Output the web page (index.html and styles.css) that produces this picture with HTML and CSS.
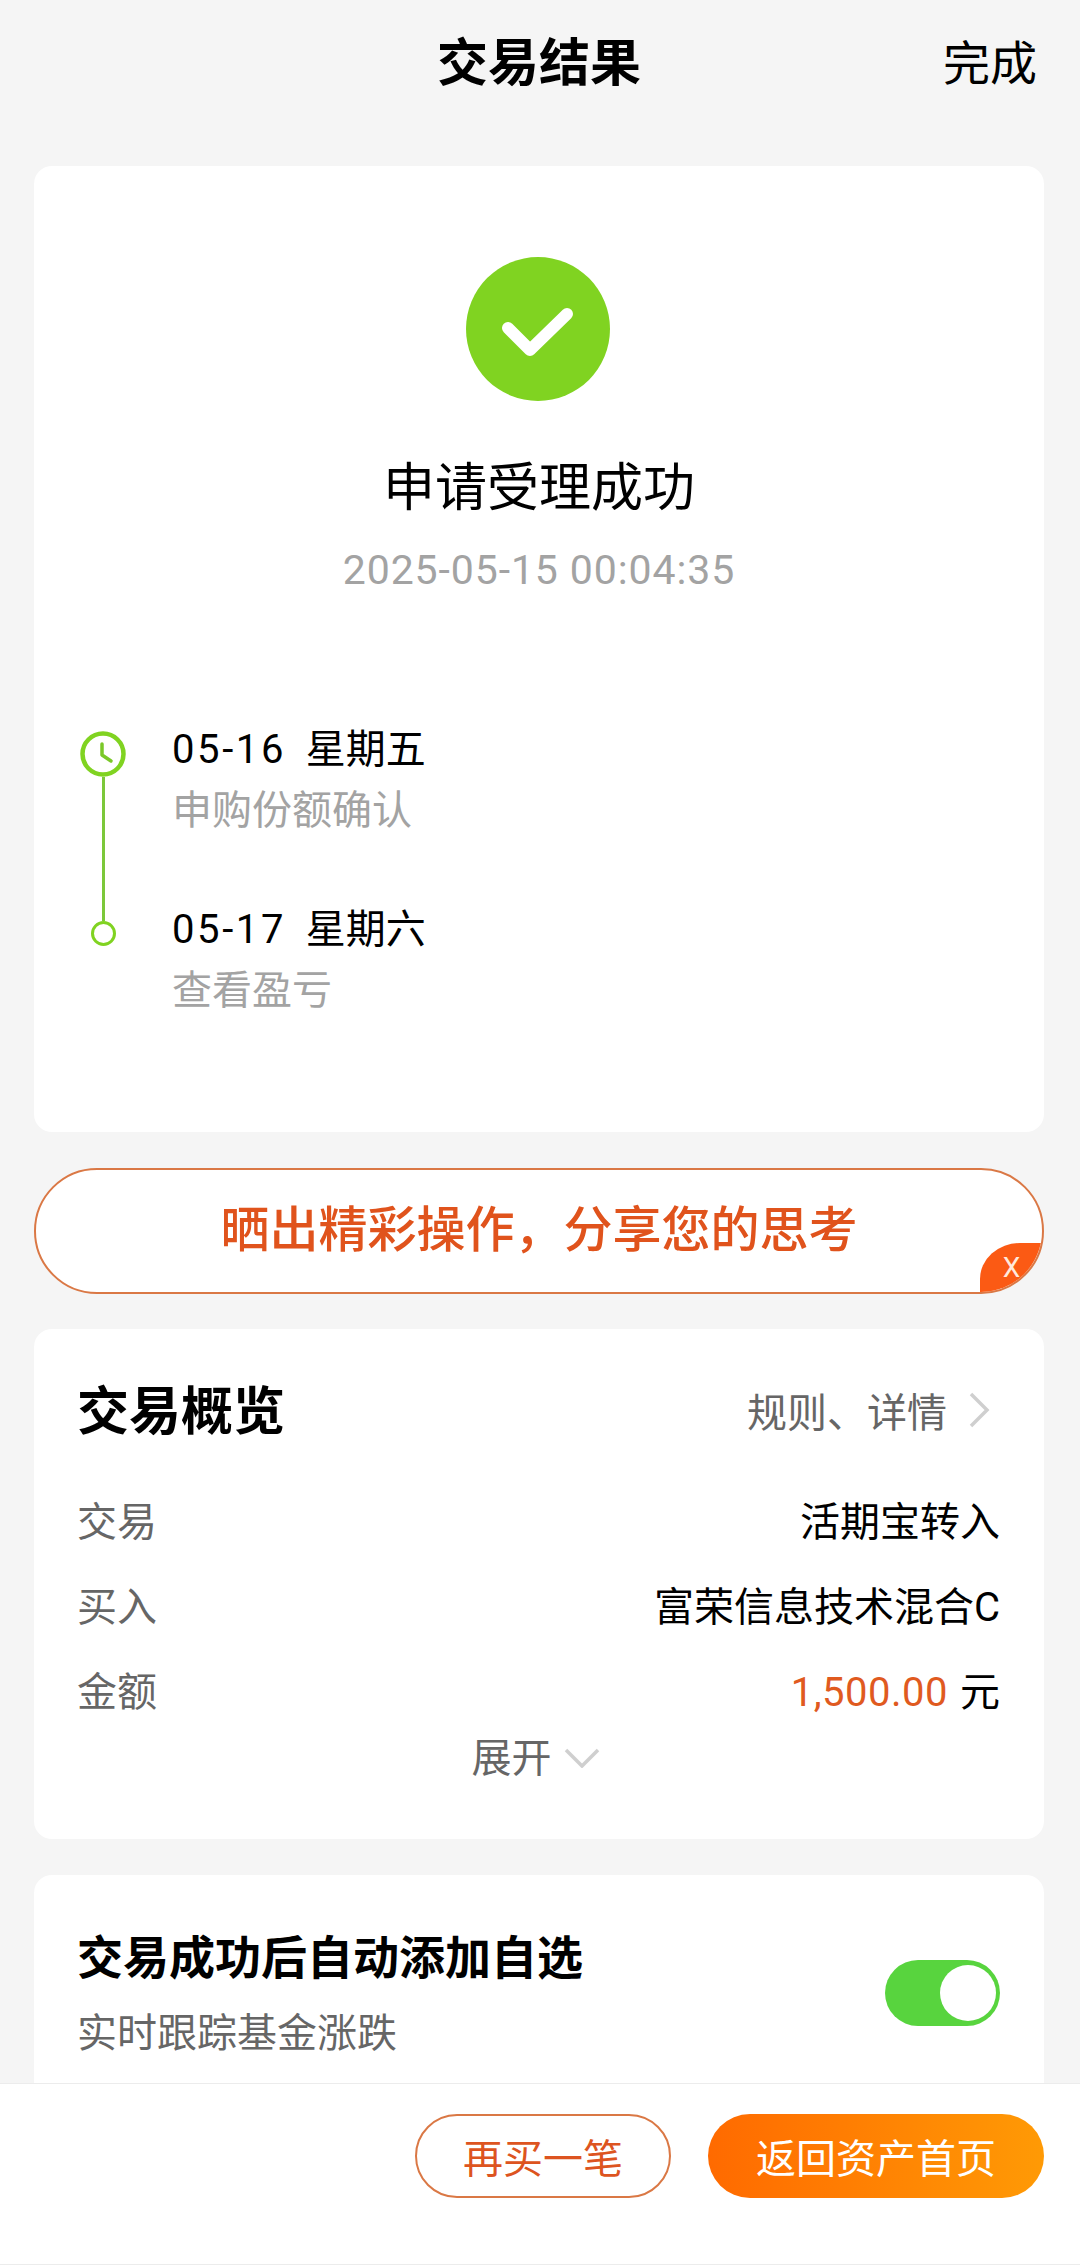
FILE: index.html
```html
<!DOCTYPE html>
<html lang="zh-CN">
<head>
  <meta charset="UTF-8">
  <title>交易结果</title>
  <link rel="stylesheet" href="styles.css">
</head>
<body>
  <main class="page">
    <header class="nav">
      <span></span>
      <h1 class="nav-title">交易结果</h1>
      <span class="nav-done">完成</span>
    </header>

    <section class="card result">
      <svg class="result-icon" viewBox="0 0 144 144">
        <circle cx="72" cy="72" r="72" fill="#80d321"/>
        <path d="M42 71 L64 93 L101 57" fill="none" stroke="#fff" stroke-width="12" stroke-linecap="round" stroke-linejoin="round"/>
      </svg>
      <div class="result-title">申请受理成功</div>
      <div class="result-time">2025-05-15 00:04:35</div>

      <div class="steps">
        <div class="step">
          <div class="step-mark first">
            <svg class="clock" viewBox="0 0 46 46">
              <circle cx="23" cy="23" r="20.5" fill="none" stroke="#80d321" stroke-width="4.5"/>
              <path d="M22 13 V24 L31 30" fill="none" stroke="#7ac828" stroke-width="3.5" stroke-linecap="round" stroke-linejoin="round"/>
            </svg>
            <div class="step-line"></div>
          </div>
          <div>
            <div class="step-date"><span class="step-day">05-16</span>&nbsp;&nbsp;星期五</div>
            <div class="step-note">申购份额确认</div>
          </div>
        </div>
        <div class="step">
          <div class="step-mark">
            <div class="step-line short"></div>
            <div class="step-dot"></div>
          </div>
          <div>
            <div class="step-date"><span class="step-day">05-17</span>&nbsp;&nbsp;星期六</div>
            <div class="step-note">查看盈亏</div>
          </div>
        </div>
      </div>
    </section>

    <section class="share">
      <span class="share-text">晒出精彩操作，分享您的思考</span>
      <span class="share-close">X</span>
    </section>

    <section class="card overview">
      <div class="overview-head">
        <h2 class="card-title">交易概览</h2>
        <div class="overview-link">
          规则、详情
          <svg class="chevron-right" viewBox="0 0 22 36">
            <path d="M3 2 L19 18 L3 34" fill="none" stroke="#cfcfcf" stroke-width="3.5"/>
          </svg>
        </div>
      </div>
      <div class="row"><span class="row-label">交易</span><span>活期宝转入</span></div>
      <div class="row"><span class="row-label">买入</span><span>富荣信息技术混合C</span></div>
      <div class="row"><span class="row-label">金额</span><span><span class="amount">1,500.00</span> 元</span></div>
      <div class="expand">
        展开
        <svg class="chevron-down" viewBox="0 0 36 20">
          <path d="M2 2 L18 18 L34 2" fill="none" stroke="#cfcfcf" stroke-width="3.5"/>
        </svg>
      </div>
    </section>

    <section class="card auto">
      <div>
        <h2 class="auto-title">交易成功后自动添加自选</h2>
        <div class="auto-note">实时跟踪基金涨跌</div>
      </div>
      <div class="toggle"><span class="toggle-knob"></span></div>
    </section>
  </main>

  <footer class="bar">
    <button class="btn btn-line" type="button">再买一笔</button>
    <button class="btn btn-fill" type="button">返回资产首页</button>
  </footer>
</body>
</html>
```

FILE: styles.css
```css
* {
  box-sizing: border-box;
}
html, body {
  margin: 0;
  height: 2265px;
}
body {
  display: flex;
  flex-direction: column;
  overflow: hidden;
  background-color: #f5f5f5;
  color: #000;
  font-family: Roboto, 'Noto Sans CJK SC', sans-serif;
  font-size: 40px;
}
h1, h2 {
  margin: 0;
}
.page {
  flex: 1;
  min-height: 0;
  overflow: hidden;
  padding: 0 36px 0 34px;
}

.nav {
  display: grid;
  grid-template-columns: 1fr auto 1fr;
  align-items: center;
  height: 166px;
  margin-right: 7px;
  padding-left: 7px;
  padding-bottom: 38px;
}
.nav-title {
  font-size: 51px;
  font-weight: 700;
  line-height: 60px;
}
.nav-done {
  justify-self: end;
  font-size: 47px;
  line-height: 60px;
}

.card {
  background: #fff;
  border-radius: 18px;
}
.result {
  height: 966px;
  padding-top: 91px;
  text-align: center;
}
.result-icon {
  display: block;
  width: 144px;
  height: 144px;
  margin-left: 432px;
}
.result-title {
  margin-top: 58px;
  font-size: 52px;
  line-height: 60px;
}
.result-time {
  margin-top: 26px;
  color: #a3a3a3;
  font-size: 41px;
  letter-spacing: 0.9px;
  line-height: 50px;
}

.steps {
  margin-top: 131px;
  padding-left: 46px;
  text-align: left;
}
.step {
  display: flex;
  gap: 46px;
  height: 180px;
}
.step-mark {
  display: flex;
  flex-direction: column;
  align-items: center;
  width: 46px;
}
.step-mark.first {
  padding-top: 5px;
}
.clock {
  display: block;
  flex: none;
  width: 46px;
  height: 46px;
}
.step-line {
  flex: 1;
  width: 3px;
  background-color: #7cc83a;
}
.step-line.short {
  flex: none;
  height: 15px;
}
.step-dot {
  width: 25px;
  height: 25px;
  border: 3px solid #80d321;
  border-radius: 50%;
}
.step-date {
  line-height: 48px;
  font-size: 40px;
}
.step-day {
  letter-spacing: 2.6px;
}
.step-note {
  margin-top: 13px;
  color: #a3a3a3;
  line-height: 48px;
}

.share {
  position: relative;
  display: flex;
  justify-content: center;
  align-items: center;
  height: 126px;
  margin-top: 36px;
  padding-bottom: 12px;
  overflow: hidden;
  background: #fff;
  border: 2px solid #da7845;
  border-radius: 63px;
}
.share-text {
  color: #e0531c;
  font-size: 49px;
  font-weight: 500;
}
.share-close {
  position: absolute;
  right: 0;
  bottom: 0;
  width: 62px;
  height: 49px;
  padding-left: 1px;
  background-color: #fb5a14;
  border-top-left-radius: 40px 36px;
  color: #ffe9dc;
  font-size: 28px;
  line-height: 49px;
  text-align: center;
}

.overview {
  height: 510px;
  margin-top: 35px;
  padding: 48px 44px 0 43px;
}
.overview-head {
  display: flex;
  justify-content: space-between;
  align-items: center;
  height: 60px;
  margin-bottom: 56px;
}
.card-title {
  font-size: 52px;
  font-weight: 700;
}
.overview-link {
  display: flex;
  align-items: center;
  gap: 21px;
  margin-top: 6px;
  margin-right: 10px;
  color: #666;
}
.chevron-right {
  width: 22px;
  height: 36px;
}
.row {
  display: flex;
  justify-content: space-between;
  height: 85px;
  line-height: 60px;
}
.row-label {
  color: #666;
}
.amount {
  margin-right: 2px;
  color: #e05a1f;
  letter-spacing: 0.5px;
}
.expand {
  display: flex;
  justify-content: center;
  align-items: center;
  gap: 12px;
  height: 50px;
  margin-top: -18px;
  padding-right: 6px;
  color: #666;
}
.chevron-down {
  width: 36px;
  height: 20px;
  margin-top: 6px;
}

.auto {
  display: flex;
  justify-content: space-between;
  align-items: flex-start;
  height: 300px;
  margin-top: 36px;
  padding: 53px 44px 0 43px;
}
.auto-title {
  font-size: 46px;
  font-weight: 700;
  line-height: 60px;
}
.auto-note {
  margin-top: 21px;
  color: #666;
  line-height: 50px;
}
.toggle {
  display: flex;
  justify-content: flex-end;
  align-items: center;
  width: 115px;
  height: 66px;
  margin-top: 32px;
  padding-right: 4px;
  background-color: #58d43e;
  border-radius: 33px;
}
.toggle-knob {
  width: 56px;
  height: 56px;
  background-color: #fff;
  border-radius: 50%;
}

.bar {
  display: flex;
  justify-content: flex-end;
  gap: 37px;
  flex: none;
  height: 182px;
  padding: 30px 36px 0;
  background: #fff;
  border-top: 1px solid #ececec;
  border-bottom: 1px solid #ececec;
}
.btn {
  height: 84px;
  border-radius: 42px;
  font-family: inherit;
  font-size: 40px;
  padding: 0;
}
.btn-line {
  width: 256px;
  background: #fff;
  border: 2px solid #da7845;
  color: #dd5420;
}
.btn-fill {
  width: 336px;
  background: linear-gradient(90deg, #ff6a00, #ff9a05);
  border: 0;
  color: #fff;
}
```
